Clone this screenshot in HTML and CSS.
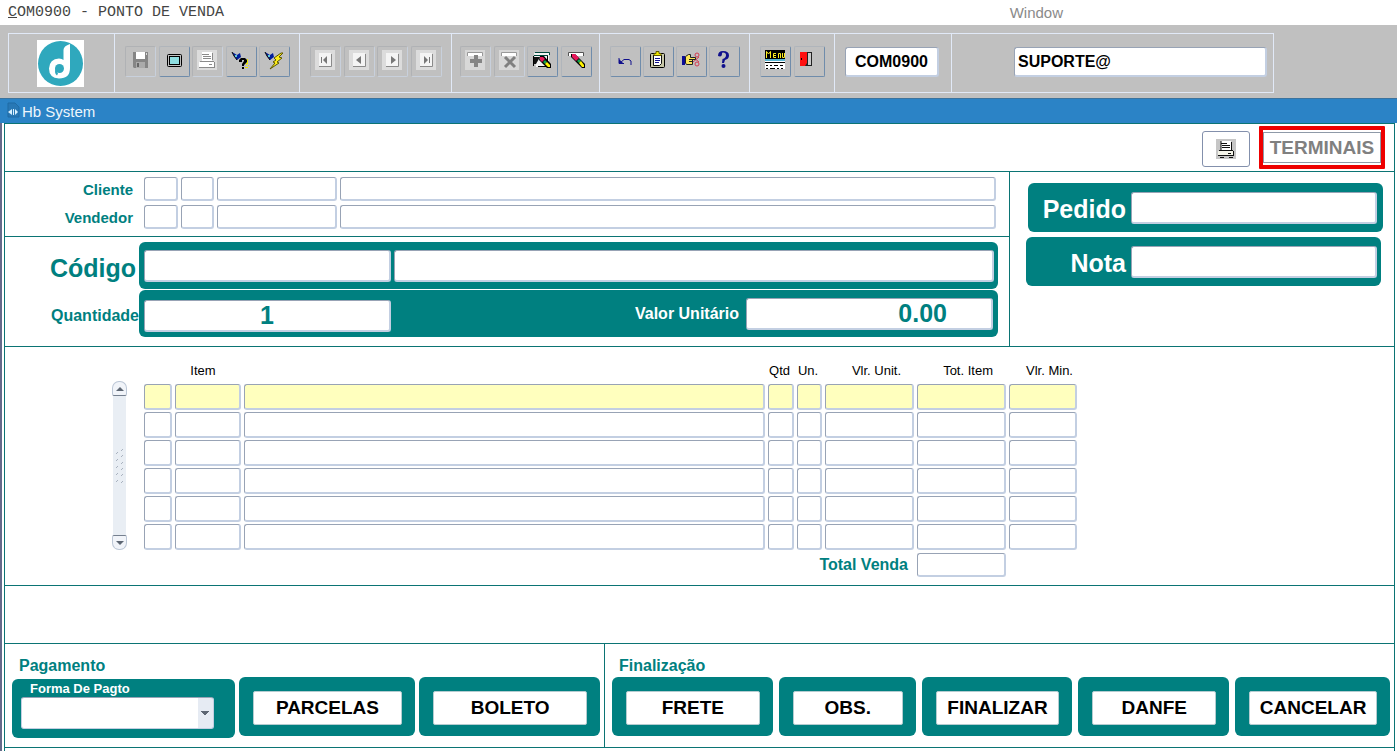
FILE: index.html
```html
<!DOCTYPE html>
<html lang="pt-BR">
<head>
    <meta charset="utf-8">
    <title>COM0900 - PONTO DE VENDA</title>
    <link rel="stylesheet" href="styles.css">
</head>
<body>
    <header class="menubar">
        <button class="menu-title"><u>C</u>OM0900 - PONTO DE VENDA</button>
        <button class="menu-window">Window</button>
    </header>

    <div class="toolbar">
        <div class="toolbar-frame">
            <div class="section logo">
                <svg width="47" height="47" viewBox="0 0 47 47">
                    <rect width="47" height="47" fill="#fff"/>
                    <circle cx="23.5" cy="23.5" r="22.5" fill="#2fa8bd"/>
                    <path d="M26.500 22V10Q26.500 6 33 4V28Q33 38.500 22 38.500Q12 38 12 28.500Q12.500 19 22 18.500Q25 18.500 26.500 20Z" fill="#fff"/>
                    <circle cx="22.500" cy="28.500" r="4.500" fill="#2fa8bd"/>
                    <path d="M18.500 29Q17 33 20 35.500L21 33.500Q19.500 32 20.500 30Z" fill="#2fa8bd"/>
                </svg>
            </div>

            <div class="section group-5">
                <button class="tool off" aria-label="Salvar">
                    <svg viewBox="0 0 20 20"><path d="M3 2H18V18H4L3 17Z" fill="#858585"/><path d="M6 2H15V9H6Z" fill="#fff"/><path d="M6 12H15V18H6Z" fill="#aaa"/><path d="M7 13H9V17H7Z" fill="#666"/><path d="M16 3H17V5H16Z" fill="#ddd"/></svg>
                </button>
                <button class="tool" aria-label="Tela">
                    <svg viewBox="0 0 20 20"><rect x="3.500" y="4.500" width="14" height="12" rx="1" fill="#c0c0c0" stroke="#000"/><rect x="5.500" y="6.500" width="10" height="8" fill="#8edde0" stroke="#000"/></svg>
                </button>
                <button class="tool off" aria-label="Imprimir">
                    <svg viewBox="0 0 20 20"><rect width="20" height="20" fill="#dcdcdc"/><path d="M5 2H15V11H5Z" fill="#fff"/><path d="M5 4.500H12M6 6.500H14M6 8.500H14M15.500 3V10M3 11.500H17" stroke="#8a8a8a" fill="none"/><path d="M2 12H17V17H2Z" fill="#fff"/><path d="M2 17.500H18M17.500 12V17M12 14.500H15" stroke="#8a8a8a" fill="none"/></svg>
                </button>
                <button class="tool" aria-label="Consultar">
                    <svg viewBox="0 0 20 20"><path d="M1 2L6 5L9 3L10 7L6 10L4 7Z" fill="#001d9b"/><path d="M1 2L3 6L6 10" stroke="#000" fill="none"/><path d="M4 5H6V7H4Z" fill="#5ec8dc"/><path d="M16 9H17V14H16ZM14 17H17V18H14ZM17 15H18V16H17ZM15 13H16V15H15Z" fill="#efe900"/><path d="M8 12V10L10 8H14L16 10V12L13 15V16H11V14L13 11V10H11V12ZM11 17H13V19H11Z" fill="#000"/></svg>
                </button>
                <button class="tool" aria-label="Executar consulta">
                    <svg viewBox="0 0 20 20"><path d="M1 2L6 5L9 3L10 7L6 10L4 7Z" fill="#001d9b"/><path d="M1 2L3 6L6 10" stroke="#000" fill="none"/><path d="M4 5H6V7H4Z" fill="#5ec8dc"/><path d="M17 3L10 8L12 10L9 12L11 13L6 19L15 13L13 12L18 8L15 7L19 3Z" fill="#ffed18" stroke="#5a5600" stroke-width="1"/></svg>
                </button>
            </div>

            <div class="section group-4">
                <button class="tool off" aria-label="Primeiro">
                    <svg viewBox="0 0 20 20"><rect width="20" height="20" fill="#dcdcdc"/><path d="M4 3H16V17H4Z" fill="#f4f4f4"/><path d="M4 16.500H16.500V4" stroke="#8a8a8a" fill="none"/><path d="M6 7H7V13H6ZM12 6V14L8 10Z" fill="#777"/></svg>
                </button>
                <button class="tool off" aria-label="Anterior">
                    <svg viewBox="0 0 20 20"><rect width="20" height="20" fill="#dcdcdc"/><path d="M4 3H16V17H4Z" fill="#f4f4f4"/><path d="M4 16.500H16.500V4" stroke="#8a8a8a" fill="none"/><path d="M12 6V14L7 10Z" fill="#777"/></svg>
                </button>
                <button class="tool off" aria-label="Próximo">
                    <svg viewBox="0 0 20 20"><rect width="20" height="20" fill="#dcdcdc"/><path d="M4 3H16V17H4Z" fill="#f4f4f4"/><path d="M4 16.500H16.500V4" stroke="#8a8a8a" fill="none"/><path d="M9 6V14L14 10Z" fill="#777"/></svg>
                </button>
                <button class="tool off" aria-label="Último">
                    <svg viewBox="0 0 20 20"><rect width="20" height="20" fill="#dcdcdc"/><path d="M4 3H16V17H4Z" fill="#f4f4f4"/><path d="M4 16.500H16.500V4" stroke="#8a8a8a" fill="none"/><path d="M8 6V14L12 10ZM13 7H14V13H13Z" fill="#777"/></svg>
                </button>
            </div>

            <div class="section group-4 edit">
                <button class="tool off" aria-label="Inserir">
                    <svg viewBox="0 0 20 20"><rect width="20" height="20" fill="#d8d8d8"/><path d="M2.500 6V2.500H17.500V6" stroke="#999" fill="#fff"/><path d="M9 5H13V9H17V13H13V17H9V13H5V9H9Z" fill="#858585"/></svg>
                </button>
                <button class="tool off" aria-label="Excluir">
                    <svg viewBox="0 0 20 20"><rect width="20" height="20" fill="#d8d8d8"/><path d="M2.500 6V2.500H17.500V6" stroke="#999" fill="#fff"/><path d="M6 7L16 17M16 7L6 17" stroke="#808080" stroke-width="3"/></svg>
                </button>
                <button class="tool" aria-label="Limpar tela">
                    <svg viewBox="0 0 20 20"><path d="M2 3H17V17H4Z" fill="#f4f4f4"/><path d="M3 2.500H17.500V5M2 5.500H16" stroke="#00483c" fill="none"/><path d="M1.500 16V6M15.500 6V16M6 16.500H14" stroke="#000" fill="none"/><path d="M2 7H8L4 14H2Z" fill="#111"/><path d="M8 6L12 6L19 14V18L15 18L7 10Z" fill="#000"/><path d="M8 7H11L13 9L10 12L8 10Z" fill="#e8165a"/><path d="M13 10L15 12L13 14L11 12Z" fill="#18a050"/><path d="M15 12L18 15V17H16L13 14Z" fill="#fff200"/></svg>
                </button>
                <button class="tool" aria-label="Limpar registro">
                    <svg viewBox="0 0 20 20"><path d="M2.500 6V2.500H17.500V6" fill="#fff" stroke="#555"/><path d="M5 4H9L19 14V18H16L5 7Z" fill="#000"/><path d="M6 4H9L13 8L10 11L6 7Z" fill="#e8165a"/><path d="M13 9L15 11L13 13L11 11Z" fill="#18a050"/><path d="M15 11L18 15V17H16L13 13Z" fill="#fff200"/></svg>
                </button>
            </div>

            <div class="section group-4 help">
                <button class="tool" aria-label="Desfazer">
                    <svg viewBox="0 0 20 20"><path d="M4 8V13.500H9M5 13L9 9.500H14L16 11V15" stroke="#10108c" fill="none"/><path d="M4 9L9 14H4Z" fill="#10108c"/></svg>
                </button>
                <button class="tool" aria-label="Lista de valores">
                    <svg viewBox="0 0 20 20"><rect x="2.500" y="3.500" width="14" height="14" rx="1" fill="#c8c8a8" stroke="#000"/><path d="M6 6H13V15H6Z" fill="#fff"/><path d="M5.500 5V15.500H11.500L13.500 13.500V5" stroke="#111" fill="none"/><path d="M8 1.500H11V3.500H13V5.500H6V3.500H8Z" fill="#f0e800" stroke="#605a00"/><path d="M7 8.500H12M7 10.500H12M7 12.500H11" stroke="#10108c"/></svg>
                </button>
                <button class="tool" aria-label="Recortar">
                    <svg viewBox="0 0 20 20"><circle cx="16" cy="5" r="2" fill="none" stroke="#d63b50"/><circle cx="16" cy="14" r="2" fill="none" stroke="#d63b50"/><path d="M12 12L18 7M12 7L18 12" stroke="#d63b50"/><path d="M1 6H4V15H1Z" fill="#0c0c96"/><path d="M4.500 6.500L7.500 4.500H9.500V7.500H14.500V9.500H11.500V14.500H5.500L4.500 13Z" fill="#ffe75a" stroke="#222"/><path d="M8 9.500H12M8 11.500H12" stroke="#222"/></svg>
                </button>
                <button class="tool" aria-label="Ajuda">
                    <svg viewBox="0 0 20 20"><path d="M4 6Q4 1 9 1Q15 1 15 5.500Q15 9 11 10L10 13H8L8.500 9Q12 8 12 5Q12 2.500 9 2.500Q8 2.500 8 3.500Q8 6.500 6 6.500Z" fill="#10108c"/><circle cx="9.500" cy="16" r="2" fill="#10108c"/></svg>
                </button>
            </div>

            <div class="section group-2">
                <button class="tool" aria-label="Menu">
                    <svg viewBox="0 0 20 20"><rect y="0" width="20" height="9" fill="#000"/><path d="M1.500 8V1.500L3.500 4L5.500 1.500V8M11 3.500H8.500V7.500H11M8.500 5.500H11M13.500 8V3.500H15.500V8M17.500 3V7.500H19.500V3" stroke="#ffee20" fill="none"/><path d="M0 9H20V11H0Z" fill="#57b5d3"/><path d="M0 11H20V19H0Z" fill="#fff"/><path d="M0 12.500H20M1 15.500H3M5 15.500H7M9 15.500H13M15 15.500H18M1 18.500H3M5 18.500H10M12 18.500H14M16 18.500H18" stroke="#000"/></svg>
                </button>
                <button class="tool" aria-label="Sair">
                    <svg viewBox="0 0 20 20"><path d="M2 2H13V16H2Z" fill="#222"/><path d="M9 3H12V15H9Z" fill="#c9c9c9"/><path d="M1 2H8V13L6 16H1Z" fill="#ff1010"/><path d="M2 8H3V10H2Z" fill="#000"/></svg>
                </button>
            </div>

            <div class="section program">
                <input class="field" type="text" aria-label="Programa" value="COM0900">
            </div>
            <div class="section user">
                <input class="field" type="text" aria-label="Usuário" value="SUPORTE@">
            </div>
        </div>
    </div>

    <div class="titlebar">
        <svg width="16" height="18" viewBox="0 0 16 18"><path d="M2 1H9L13 5V15H2Z" fill="#2878b5" stroke="#1f6ba5"/><path d="M6 7V13L2 10Z" fill="#d9f1ff"/><path d="M7 7H8V13H7Z" fill="#d9f1ff"/><path d="M9 7V13L12 10Z" fill="#d9f1ff"/></svg>
        <span>Hb System</span>
    </div>

    <div class="window">
        <main class="canvas">
            <div class="row actions">
                <button class="print" aria-label="Imprimir">
                    <svg width="20" height="20" viewBox="0 0 20 20"><rect width="20" height="20" fill="#c6c6c6"/><path d="M5 2H15V11H5Z" fill="#fff"/><path d="M5 2V11M5 4.500H11M6 6.500H14M6 8.500H14M15.500 3V11M3 11.500H17" stroke="#111" fill="none"/><path d="M2 12H17V16H2Z" fill="#f3f3e8"/><path d="M2 16.500H18M17.500 12V16M4 18.500H8M13 18.500H17M12 14.500H15" stroke="#111" fill="none"/></svg>
                </button>
                <div class="highlight">
                    <button class="terminals">TERMINAIS</button>
                </div>
            </div>

            <div class="row order">
                <div class="order-left">
                    <div class="people">
                        <label for="cliente">Cliente</label>
                        <input class="field" type="text" id="cliente">
                        <input class="field" type="text" aria-label="Cliente loja">
                        <input class="field" type="text" aria-label="Cliente documento">
                        <input class="field" type="text" aria-label="Cliente nome">
                        <label for="vendedor">Vendedor</label>
                        <input class="field" type="text" id="vendedor">
                        <input class="field" type="text" aria-label="Vendedor loja">
                        <input class="field" type="text" aria-label="Vendedor documento">
                        <input class="field" type="text" aria-label="Vendedor nome">
                    </div>
                    <div class="product">
                        <label class="big" for="codigo">Código</label>
                        <div class="box code">
                            <input class="field" type="text" id="codigo">
                            <input class="field" type="text" aria-label="Descrição do produto">
                        </div>
                        <label for="quantidade">Quantidade</label>
                        <div class="box quantity">
                            <input class="field amount" type="text" id="quantidade" value="1">
                            <label for="valor">Valor Unitário</label>
                            <input class="field price" type="text" id="valor" value="0.00">
                        </div>
                    </div>
                </div>
                <div class="order-right">
                    <div class="box document">
                        <label for="pedido">Pedido</label>
                        <input class="field" type="text" id="pedido">
                    </div>
                    <div class="box document note">
                        <label for="nota">Nota</label>
                        <input class="field" type="text" id="nota">
                    </div>
                </div>
            </div>

            <div class="row items">
                <div class="scrollbar">
                    <button class="scroll-up" aria-label="Subir"></button>
                    <div class="track">
                        <svg width="10" height="36" viewBox="0 0 10 36"><path d="M1 6L3 4M1 13L3 11M1 20L3 18M1 27L3 25M1 34L3 32M6 3L8 1M6 9L8 7M6 16L8 14M6 22L8 20M6 28L8 26M6 35L8 33" stroke="#a9b2bf"/></svg>
                    </div>
                    <button class="scroll-down" aria-label="Descer"></button>
                </div>
                <table>
                    <colgroup>
                        <col class="c-mark"><col class="c-item"><col><col class="c-qtd">
                        <col class="c-un"><col class="c-value"><col class="c-value"><col class="c-min">
                    </colgroup>
                    <thead>
                        <tr>
                            <th></th>
                            <th class="item">Item</th>
                            <th></th>
                            <th class="short">Qtd</th>
                            <th class="short">Un.</th>
                            <th class="value">Vlr. Unit.</th>
                            <th class="value">Tot. Item</th>
                            <th class="min">Vlr. Min.</th>
                        </tr>
                    </thead>
                    <tbody id="rows"></tbody>
                    <tfoot>
                        <tr>
                            <td colspan="6"><label for="total">Total Venda</label></td>
                            <td><input class="field" type="text" id="total"></td>
                            <td></td>
                        </tr>
                    </tfoot>
                </table>
            </div>

            <div class="row message"></div>

            <div class="row footer">
                <section class="payment">
                    <h2>Pagamento</h2>
                    <div class="boxes">
                        <div class="box method">
                            <label for="forma">Forma De Pagto</label>
                            <select id="forma"><option></option></select>
                        </div>
                        <div class="box"><button>PARCELAS</button></div>
                        <div class="box"><button>BOLETO</button></div>
                    </div>
                </section>
                <section class="finish">
                    <h2>Finalização</h2>
                    <div class="boxes">
                        <div class="box"><button>FRETE</button></div>
                        <div class="box"><button>OBS.</button></div>
                        <div class="box"><button>FINALIZAR</button></div>
                        <div class="box"><button>DANFE</button></div>
                        <div class="box"><button>CANCELAR</button></div>
                    </div>
                </section>
            </div>
        </main>
    </div>

    <script>
        const columns = ['Marca', 'Item', 'Descrição', 'Qtd', 'Un.', 'Vlr. Unit.', 'Tot. Item', 'Vlr. Min.'];
        const rows = document.getElementById('rows');

        for (let i = 1; i <= 6; i++) {
            const tr = document.createElement('tr');
            columns.forEach(function (name) {
                const input = document.createElement('input');
                input.type = 'text';
                input.className = 'field';
                input.setAttribute('aria-label', name + ' ' + i);
                tr.insertCell().appendChild(input);
            });
            rows.appendChild(tr);
        }
    </script>
</body>
</html>
```
FILE: styles.css
```css
* {
    margin: 0;
    padding: 0;
    box-sizing: border-box;
}

body {
    min-height: 100vh;
    display: flex;
    flex-direction: column;
    background: #fff;
    font-family: "Liberation Sans", Arial, sans-serif;
    font-size: 16px;
}

button, input, select {
    font: inherit;
}

svg {
    display: block;
}

.field {
    display: block;
    width: 100%;
    min-width: 0;
    height: 24px;
    background: #fff;
    border: 1px solid;
    border-width: 1px 2px 2px 1px;
    border-color: #98a3b5 #c3cfe2 #c3cfe2 #98a3b5;
    border-radius: 3px;
}

/* menu */
.menubar {
    height: 25px;
    display: flex;
    align-items: center;
    justify-content: space-between;
    padding: 0 334px 0 8px;
    font-size: 15px;
}

.menubar button {
    border: none;
    background: none;
}

.menu-title {
    font-family: "Liberation Mono", monospace;
    color: #444;
}

.menu-window {
    color: #8a8a8a;
}

/* toolbar */
.toolbar {
    height: 73px;
    padding: 8px 123px 5px 8px;
    background: #c0c0c0;
}

.toolbar-frame {
    height: 60px;
    display: flex;
    border: 1px solid #e1e9f7;
}

.section {
    display: flex;
    align-items: center;
    justify-content: space-between;
    padding: 0 9px 4px 10px;
    border-right: 1px solid #e1e9f7;
}

.section:last-child {
    border-right: none;
}

.logo {
    width: 106px;
    justify-content: center;
    padding: 0 2px 0 0;
}

.group-5 {
    width: 185px;
}

.group-4 {
    width: 152px;
}

.edit {
    width: 148px;
    padding-left: 8px;
    padding-right: 7px;
}

.help {
    width: 150px;
}

.group-2 {
    width: 85px;
}

.tool {
    width: 31px;
    height: 31px;
    padding: 3px 5px 6px 4px;
    background: none;
    border: 1px solid;
    border-color: #b0b5bb #6f8cab #6f8cab #b0b5bb;
    border-radius: 2px;
}

.tool.off {
    border-color: #b0b2b5 #c8d0dc #c8d0dc #b0b2b5;
}

.tool svg {
    width: 20px;
    height: 20px;
}

.toolbar .field {
    height: 30px;
    font-weight: bold;
}

.program {
    width: 117px;
    padding: 0 12px 2px 10px;
}

.program .field {
    text-align: center;
}

.user {
    flex: 1;
    padding: 0 6px 2px 62px;
}

.user .field {
    padding-left: 3px;
}

.titlebar {
    height: 25px;
    display: flex;
    align-items: center;
    padding: 0 6px;
    background: #2b83c6;
    border-top: 1px solid #3b739e;
    color: #eef6fc;
    font-size: 15px;
}

/* form canvas */
.window {
    flex: 1;
    display: flex;
    padding: 0 2px;
    border-left: 2px solid #656a8a;
}

.canvas {
    flex: 1;
    border: 1px solid #0b7474;
    border-bottom: none;
}

.row {
    border-bottom: 1px solid #0b7474;
}

label, h2 {
    color: #008080;
    font-size: 16px;
    font-weight: bold;
}

.box {
    background: #008080;
    border-radius: 6px;
}

.box label {
    color: #fff;
}

.actions {
    height: 48px;
    display: flex;
    justify-content: flex-end;
    align-items: flex-end;
    gap: 9px;
    padding: 0 9px 2px 0;
}

.print {
    width: 48px;
    height: 36px;
    margin-bottom: 2px;
    display: flex;
    align-items: center;
    justify-content: center;
    background: #fff;
    border: 1px solid #8390ac;
    border-radius: 3px;
}

.highlight {
    width: 126px;
    padding: 2px 0;
    border: 4px solid #ee0000;
    border-radius: 1px;
}

.terminals {
    width: 100%;
    height: 31px;
    background: #fff;
    border: 1px solid #8f9aa8;
    color: #808080;
    font-size: 19px;
    font-weight: bold;
}

.order {
    display: flex;
}

.order-left {
    flex: 1;
    border-right: 1px solid #0b7474;
}

.order-right {
    width: 384px;
    padding: 11px 11px 0 18px;
}

.people {
    display: grid;
    grid-template-columns: 128px 34px 33px 120px 1fr;
    gap: 4px 3px;
    align-items: center;
    padding: 5px 13px 7px 8px;
    border-bottom: 1px solid #0b7474;
}

.people label {
    padding-right: 8px;
    text-align: right;
    font-size: 15px;
}

.product {
    display: grid;
    grid-template-columns: 134px 1fr;
    row-gap: 1px;
    align-items: center;
    padding: 5px 11px 9px 0;
}

.product > label {
    padding-top: 5px;
    text-align: right;
}

.product > .big {
    padding-right: 3px;
}

.product .box {
    height: 47px;
    display: flex;
    align-items: center;
    gap: 3px;
    padding: 0 4px 0 5px;
}

.big, .document label, .product .field {
    font-size: 25px;
}

.product .field, .document .field {
    height: 32px;
    font-weight: bold;
    color: #008080;
}

.code .field:first-child, .quantity .field {
    width: 247px;
}

.code .field:last-child {
    flex: 1;
}

.quantity .amount {
    margin-top: 4px;
    text-align: center;
}

.quantity label {
    margin-left: auto;
    margin-right: 4px;
}

.quantity .price {
    margin-right: 1px;
    text-align: right;
    padding-right: 44px;
}

.document {
    height: 49px;
    display: flex;
    align-items: center;
    justify-content: flex-end;
    gap: 5px;
    padding-right: 6px;
}

.document label {
    padding-top: 4px;
}

.document .field {
    width: 246px;
}

/* same box, a bit to the left, field still aligned */
.note {
    margin: 5px 2px 0 -2px;
    padding-right: 4px;
}

/* items */
.items {
    display: flex;
    gap: 14px;
    padding: 14px 314px 6px 107px;
}

.scrollbar {
    width: 15px;
    height: 169px;
    margin-top: 20px;
    display: flex;
    flex-direction: column;
    align-items: center;
}

.scrollbar button {
    width: 15px;
    height: 15px;
    display: flex;
    align-items: center;
    justify-content: center;
    background: #f1f4f9;
    border: 1px solid #bcc7d6;
}

.scrollbar .scroll-up {
    border-radius: 7px 7px 2px 2px;
    border-bottom-color: #75808f;
}

.scrollbar .scroll-down {
    border-radius: 2px 2px 7px 7px;
    border-top-color: #75808f;
}

.scroll-up::before, .scroll-down::before {
    content: "";
    border: 4px solid transparent;
    border-top-width: 0;
    border-bottom-color: #5d6673;
}

.scroll-down::before {
    border-width: 4px 4px 0;
    border-top-color: #5d6673;
}

.track {
    flex: 1;
    width: 13px;
    display: flex;
    align-items: center;
    justify-content: center;
    background: #e9eef4;
}

table {
    flex: 1;
    width: 100%;
    table-layout: fixed;
    border-spacing: 3px 2px;
}

.c-mark {
    width: 28px;
}

.c-item {
    width: 66px;
}

.c-qtd {
    width: 26px;
}

.c-un {
    width: 25px;
}

.c-value {
    width: 89px;
}

.c-min {
    width: 68px;
}

th {
    height: 19px;
    font-size: 13px;
    font-weight: normal;
    vertical-align: top;
    white-space: nowrap;
}

th.item {
    padding-right: 10px;
}

th.short {
    padding-right: 3px;
}

th.value {
    text-align: right;
    padding-right: 13px;
}

th.min {
    text-align: right;
    padding-right: 4px;
}

tbody .field {
    height: 26px;
}

tbody tr:first-child .field {
    background: #ffffbe;
}

tfoot td {
    padding-top: 1px;
}

tfoot td:first-child {
    text-align: right;
    padding-right: 6px;
}

.message {
    height: 58px;
}

/* footer */
.footer {
    display: grid;
    grid-template-columns: 600fr 789fr;
}

.payment {
    padding: 12px 4px 9px 7px;
    border-right: 1px solid #0b7474;
}

.finish {
    padding: 12px 4px 9px 7px;
}

h2 {
    height: 21px;
    padding-left: 7px;
    line-height: 19px;
}

.boxes {
    display: grid;
    gap: 4px;
}

.payment .boxes {
    grid-template-columns: 223fr 177fr 181fr;
}

.finish .boxes {
    grid-template-columns: 161fr 137fr 151fr 151fr 155fr;
    gap: 6px;
}

.boxes .box {
    height: 59px;
    padding: 14px 13px 11px 14px;
}

.boxes button {
    width: 100%;
    height: 34px;
    background: #fff;
    border: 1px solid #b4ccd0;
    border-radius: 2px;
    color: #000;
    font-size: 19px;
    font-weight: bold;
}

.boxes .method {
    margin-top: 2px;
    padding: 2px 21px 8px 9px;
}

.method label {
    display: block;
    padding-left: 9px;
    line-height: 16px;
    font-size: 13px;
}

.method select {
    display: block;
    width: 100%;
    height: 32px;
    appearance: none;
    border: 1px solid #c3cfe2;
    border-top-color: #98a3b5;
    border-radius: 3px;
    background:
        conic-gradient(from 315deg at 50% 100%, #5d6673 90deg, transparent 0) right 4px center / 8px 4px no-repeat,
        linear-gradient(#e6ebf3, #e6ebf3) right / 15px 100% no-repeat,
        #fff;
}
```
